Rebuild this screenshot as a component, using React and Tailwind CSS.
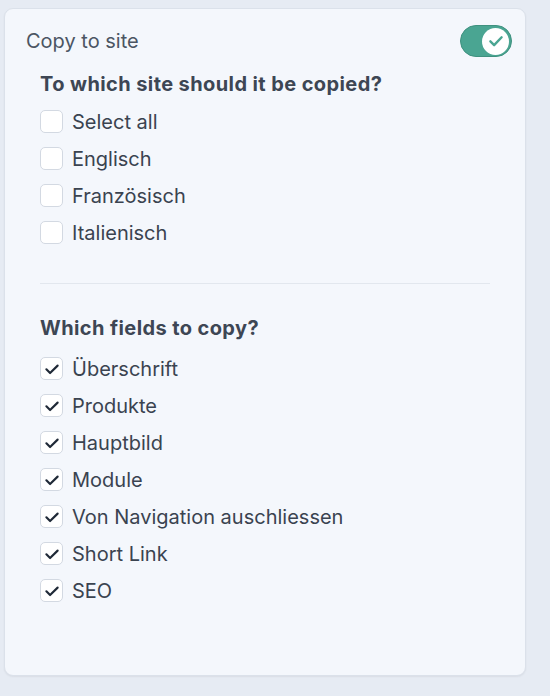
import React from "react";

function Check({ checked }) {
  return (
    <span className="flex h-[23px] w-[23px] shrink-0 items-center justify-center rounded-[5px] border border-[#d3d9e2] bg-white">
      {checked && (
        <svg width="18" height="18" viewBox="0 0 16 16" fill="none">
          <path d="M3 8.3l3.3 3.3L13 5" stroke="#1f2937" strokeWidth="1.9" strokeLinecap="round" strokeLinejoin="round" />
        </svg>
      )}
    </span>
  );
}

function Row({ label, checked }) {
  return (
    <div className="flex h-[37px] items-center gap-[9px]">
      <Check checked={checked} />
      <span className="text-[20px] leading-none text-[#3a4350]">{label}</span>
    </div>
  );
}

export default function App() {
  const sites = ["Select all", "Englisch", "Französisch", "Italienisch"];
  const fields = ["Überschrift", "Produkte", "Hauptbild", "Module", "Von Navigation auschliessen", "Short Link", "SEO"];
  return (
    <div className="h-[696px] w-[550px] bg-[#e6ebf3] pl-[4px] pt-[8px]" style={{ fontFamily: "Inter, 'Noto Sans', sans-serif" }}>
      <div className="h-[668px] w-[522px] rounded-[9px] border border-[#dbe1ea] bg-[#f4f7fc] pl-[21px] pr-[13px] pt-[16px] shadow-[0_1px_2px_rgba(0,0,0,0.06)]">
        <div className="flex h-8 items-center justify-between">
          <span className="text-[20px] text-[#4b5563]">Copy to site</span>
          <span className="flex h-[32px] w-[52px] items-center justify-end rounded-full border border-[#3f917f] bg-[#4aa592] pr-[2px]">
            <span className="flex h-[27px] w-[27px] items-center justify-center rounded-full bg-white">
              <svg width="20" height="20" viewBox="0 0 16 16" fill="none">
                <path d="M3.5 8.3l3 3L12.5 5" stroke="#4aa592" strokeWidth="1.9" strokeLinecap="round" strokeLinejoin="round" />
              </svg>
            </span>
          </span>
        </div>
        <div className="ml-[14px] mr-[22px]">
          <div className="mt-[15px] h-6 text-[20px] font-bold leading-6 tracking-[0.4px] text-[#3d4654]">To which site should it be copied?</div>
          <div className="mt-[7px]">
            {sites.map((s) => (
              <Row key={s} label={s} checked={false} />
            ))}
          </div>
          <div className="mt-[32px] border-t border-[#e2e7ee]" />
          <div className="mt-[32px] h-6 text-[20px] font-bold leading-6 tracking-[0.4px] text-[#3d4654]">Which fields to copy?</div>
          <div className="mt-[10px]">
            {fields.map((s) => (
              <Row key={s} label={s} checked={true} />
            ))}
          </div>
        </div>
      </div>
    </div>
  );
}
